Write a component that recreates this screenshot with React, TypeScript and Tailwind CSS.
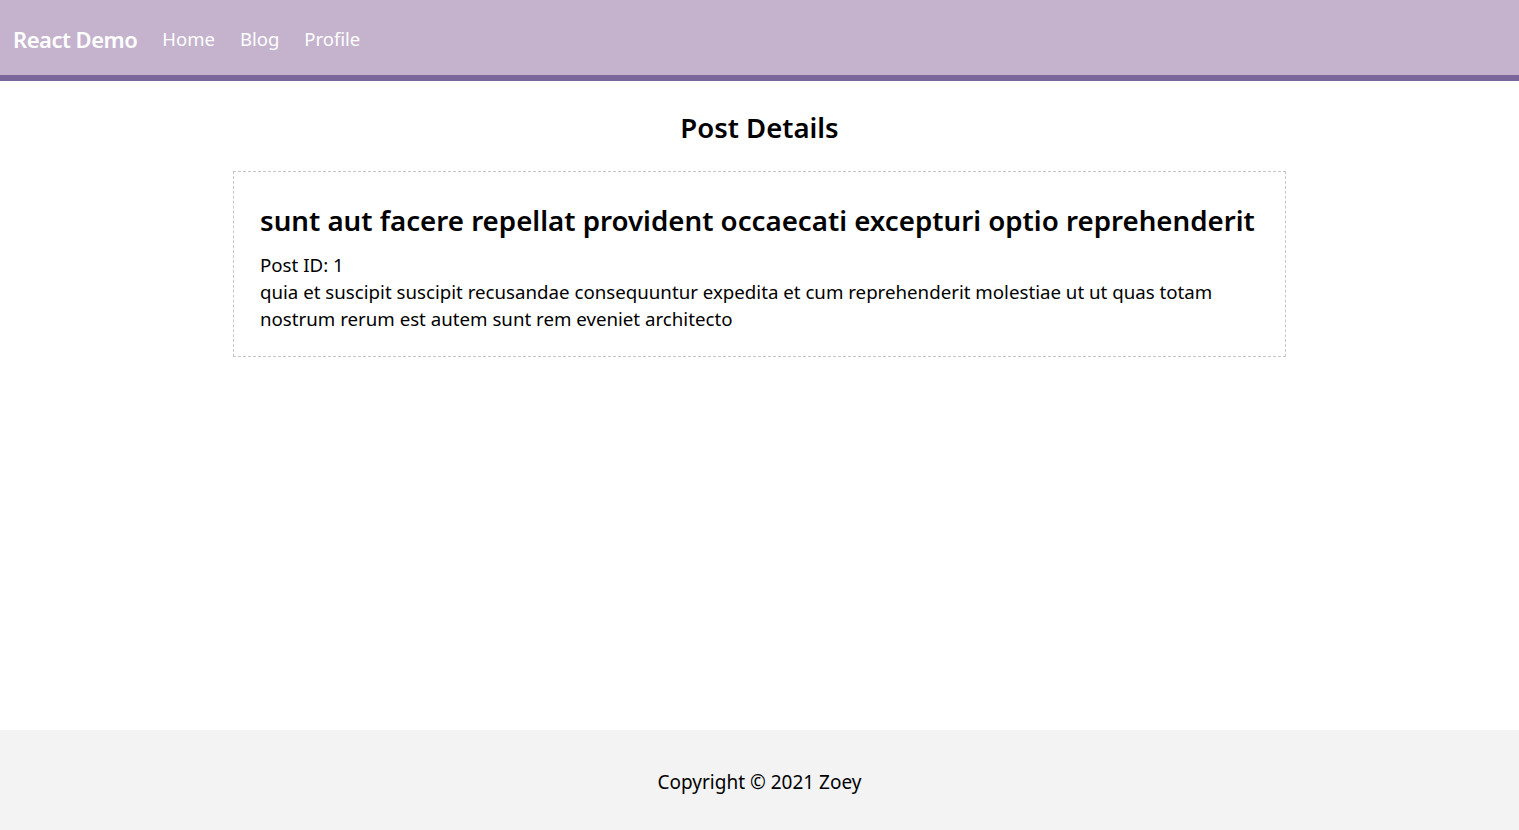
import React from "react";

export default function App() {
  return (
    <div className="min-h-[830px] flex flex-col bg-white text-black" style={{ fontFamily: '"Noto Sans", "Open Sans", sans-serif' }}>
      <header className="h-[81px] bg-[#c5b3ce] border-b-[6px] border-[#7b6699] flex items-center px-[13px] pt-[3px] gap-[25px] text-white">
        <span className="text-[22px] font-semibold tracking-[-0.5px]">React Demo</span>
        <a className="text-[18.5px]">Home</a>
        <a className="text-[18.5px]">Blog</a>
        <a className="text-[18.5px]">Profile</a>
      </header>
      <main className="flex-1 flex flex-col items-center">
        <h1 className="mt-[27px] text-[27.5px] font-semibold leading-[40px]">Post Details</h1>
        <div className="mt-[23px] w-[1053px] border border-dashed border-[#c8c8c8] px-[26px] pt-[28px] pb-[24px]">
          <h2 className="text-[27.7px] font-semibold leading-[40px] whitespace-nowrap">sunt aut facere repellat provident occaecati excepturi optio reprehenderit</h2>
          <p className="mt-[11px] text-[18.7px] leading-[27px]">Post ID: 1</p>
          <p className="text-[18.7px] leading-[27px]">quia et suscipit suscipit recusandae consequuntur expedita et cum reprehenderit molestiae ut ut quas totam nostrum rerum est autem sunt rem eveniet architecto</p>
        </div>
      </main>
      <footer className="h-[100px] bg-[#f3f3f3] flex items-center justify-center pt-[4px] text-[19px]">
        Copyright © 2021 Zoey
      </footer>
    </div>
  );
}
